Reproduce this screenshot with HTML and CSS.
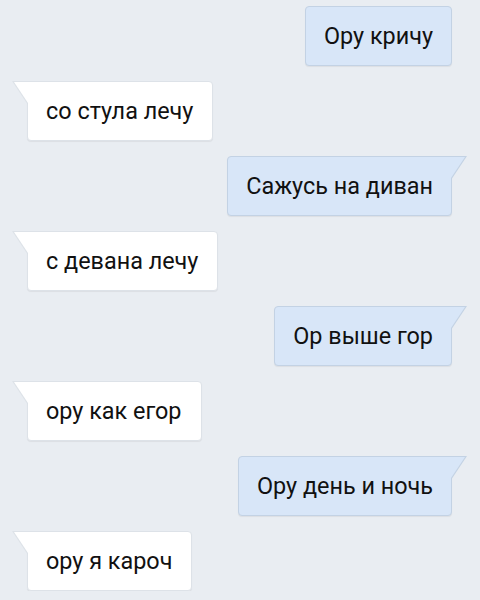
FILE: index.html
```html
<!DOCTYPE html>
<html lang="ru">
	<head>
		<meta charset="utf-8">
		<title>Чат</title>
		<link rel="stylesheet" href="styles.css">
	</head>
	<body>
		<div class="chat">
			<div class="msg out">Ору кричу</div>
			<div class="msg in tail">со стула лечу</div>
			<div class="msg out tail">Сажусь на диван</div>
			<div class="msg in tail">с девана лечу</div>
			<div class="msg out tail">Ор выше гор</div>
			<div class="msg in tail">ору как егор</div>
			<div class="msg out tail">Ору день и ночь</div>
			<div class="msg in tail">ору я кароч</div>
		</div>
	</body>
</html>
```

FILE: styles.css
```css
body {
	margin: 0;
	background-color: #e9edf2;
	font-family: Roboto, 'Noto Sans', sans-serif;
}

.chat {
	display: flex;
	flex-direction: column;
	gap: 15px;
	padding: 6px 28px 0 27px;
}

.msg {
	position: relative;
	box-sizing: border-box;
	height: 60px;
	padding: 0 18px;
	display: flex;
	align-items: center;
	font-size: 23.4px;
	color: #111111;
	border: 1px solid;
	border-radius: 4px;
	box-shadow: 0 1px 1px rgba(0, 0, 0, 0.06);
}

.out {
	align-self: flex-end;
	background-color: #d8e6f8;
	border-color: #c3d2e4;
}

.in {
	align-self: flex-start;
	padding-right: 19px;
	background-color: #ffffff;
	border-color: #dde2e8;
}

/* tail: border-coloured triangle with a filled one on top */

.tail::before,
.tail::after {
	content: '';
	position: absolute;
	top: -1px;
	width: 16px;
	height: 24px;
}

.in.tail { border-top-left-radius: 0; }
.out.tail { border-top-right-radius: 0; }

.in.tail::before {
	left: -16px;
	background-color: #dde2e8;
	clip-path: polygon(0 0, 100% 0, 100% 100%);
}

.in.tail::after {
	left: -14px;
	top: 0;
	background-color: #ffffff;
	clip-path: polygon(0 0, 100% 0, 100% 100%);
}

.out.tail::before {
	right: -16px;
	background-color: #c3d2e4;
	clip-path: polygon(0 0, 100% 0, 0 100%);
}

.out.tail::after {
	right: -14px;
	top: 0;
	background-color: #d8e6f8;
	clip-path: polygon(0 0, 100% 0, 0 100%);
}
```
